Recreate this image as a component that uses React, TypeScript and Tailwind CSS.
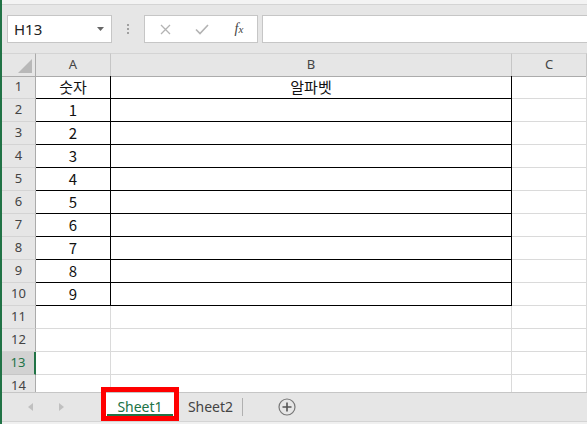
import React from "react";

const COLS = ["A", "B", "C"];
const ROWS = Array.from({ length: 14 }, (_, i) => i + 1);

function cellContent(r: number, c: number): string {
  if (c === 0) {
    if (r === 1) return "숫자";
    if (r >= 2 && r <= 10) return String(r - 1);
  }
  if (c === 1 && r === 1) return "알파벳";
  return "";
}

export default function App() {
  return (
    <div
      className="relative w-[587px] h-[424px] overflow-hidden bg-[#e6e6e6] border-l-2 border-[#217346] flex flex-col"
      style={{ fontFamily: '"Noto Sans", "Noto Sans CJK KR", sans-serif' }}
    >
      {/* top strip */}
      <div className="h-[5px] bg-[#f3f3f3] border-b border-[#d4d4d4] shrink-0" />

      {/* formula bar */}
      <div className="h-[48px] shrink-0 flex items-start pt-[10px]">
        <div className="ml-[5px] w-[105px] h-[28px] bg-white border border-[#c6c6c6] flex items-center justify-between pl-[6px] pr-[7px]">
          <span className="text-[15px] text-[#222] leading-none">H13</span>
          <svg width="7" height="4" viewBox="0 0 7 4">
            <path d="M0 0 L7 0 L3.5 4 Z" fill="#666" />
          </svg>
        </div>
        <div className="w-[32px] h-[28px] flex flex-col items-center justify-center gap-[2px]">
          <div className="w-[2px] h-[2px] bg-[#a0a0a0]" />
          <div className="w-[2px] h-[2px] bg-[#a0a0a0]" />
          <div className="w-[2px] h-[2px] bg-[#a0a0a0]" />
        </div>
        <div className="w-[114px] h-[28px] bg-white border border-[#c6c6c6] flex items-center">
          <div className="w-[38px] flex justify-center pl-[2px]">
            <svg width="11" height="11" viewBox="0 0 11 11">
              <path d="M1 1 L10 10 M10 1 L1 10" stroke="#b3b3b3" strokeWidth="1.3" />
            </svg>
          </div>
          <div className="w-[38px] flex justify-center">
            <svg width="14" height="11" viewBox="0 0 14 11">
              <path d="M1 5.5 L5 9.5 L13 1" stroke="#b3b3b3" strokeWidth="1.6" fill="none" />
            </svg>
          </div>
          <div className="w-[36px] flex justify-center">
            <span
              className="text-[14px] italic text-[#444] leading-none"
              style={{ fontFamily: '"Liberation Serif", "DejaVu Serif", serif' }}
            >
              f<span className="text-[11px]">x</span>
            </span>
          </div>
        </div>
        <div className="ml-[4px] flex-1 h-[28px] bg-white border border-[#c6c6c6] border-r-0" />
      </div>

      {/* sheet grid */}
      <div className="flex-1 overflow-hidden bg-white">
        <div className="grid grid-cols-[34px_75px_401px_75px_1fr] auto-rows-[23px]">
          {/* header row */}
          <div className="h-[24px] bg-[#e6e6e6] border-t border-[#d4d4d4] border-r border-r-[#ababab] border-b border-b-[#ababab] relative">
            <svg className="absolute right-[3px] bottom-[3px]" width="14" height="14" viewBox="0 0 14 14">
              <path d="M14 0 L14 14 L0 14 Z" fill="#b8b8b8" />
            </svg>
          </div>
          {COLS.map((c) => (
            <div
              key={c}
              className="h-[24px] bg-[#e6e6e6] border-t border-[#d4d4d4] border-r border-r-[#c6c6c6] border-b border-b-[#ababab] flex items-center justify-center text-[13px] text-[#444]"
            >
              {c}
            </div>
          ))}
          <div className="h-[24px] bg-[#e6e6e6] border-t border-[#d4d4d4] border-b border-b-[#ababab]" />

          {ROWS.map((r) => {
            const sel = r === 13;
            return (
              <React.Fragment key={r}>
                <div
                  className={
                    sel
                      ? "bg-[#d2d2d2] border-r-2 border-r-[#217346] border-b border-b-[#c6c6c6] flex items-center justify-center text-[13px] text-[#217346]"
                      : "bg-[#e6e6e6] border-r border-r-[#ababab] border-b border-b-[#d4d4d4] flex items-center justify-center text-[13px] text-[#444]"
                  }
                >
                  {r}
                </div>
                {[0, 1, 2].map((c) => {
                  const table = c < 2 && r <= 10;
                  return (
                    <div
                      key={c}
                      className={
                        table
                          ? "border-r border-b border-black flex items-center justify-center text-[15px] text-[#111]"
                          : "border-r border-b border-[#dadada] flex items-center justify-center text-[15px] text-[#111]"
                      }
                      style={{ fontFamily: '"Noto Sans CJK KR", "Noto Sans", sans-serif' }}
                    >
                      {cellContent(r, c)}
                    </div>
                  );
                })}
                <div className="border-b border-[#dadada]" />
              </React.Fragment>
            );
          })}
        </div>
      </div>

      {/* tab bar */}
      <div className="h-[29px] shrink-0 bg-[#e6e6e6] border-t border-[#c6c6c6] flex items-center">
        <div className="w-[99px] flex items-center">
          <div className="ml-[26px]">
            <svg width="5" height="8" viewBox="0 0 5 8">
              <path d="M5 0 L0 4 L5 8 Z" fill="#c0c0c0" />
            </svg>
          </div>
          <div className="ml-[26px]">
            <svg width="5" height="8" viewBox="0 0 5 8">
              <path d="M0 0 L5 4 L0 8 Z" fill="#c0c0c0" />
            </svg>
          </div>
        </div>
        <div className="w-[78px] h-full bg-white relative flex items-center justify-center text-[14px] text-[#217346]">
          <span className="-mt-[2px]">Sheet1</span>
          <div className="absolute left-[6px] right-[6px] bottom-[5px] h-[2px] bg-[#217346]" />
        </div>
        <div className="w-[63px] flex items-center justify-center text-[14px] text-[#444] -mt-[2px]">Sheet2</div>
        <div className="w-px h-[18px] bg-[#b0b0b0]" />
        <div className="ml-[35px] -mt-[1px]">
          <svg width="18" height="18" viewBox="0 0 18 18">
            <circle cx="9" cy="9" r="8" fill="none" stroke="#777" strokeWidth="1.2" />
            <path d="M9 4.5 V13.5 M4.5 9 H13.5" stroke="#555" strokeWidth="1.6" />
          </svg>
        </div>
      </div>
      <div className="h-[3px] shrink-0 bg-[#f0f0f0] border-t border-[#d4d4d4]" />

      {/* red annotation box */}
      <div className="absolute left-[99px] top-[387px] w-[78px] h-[34px] border-[5px] border-[#ff0000] pointer-events-none" />
    </div>
  );
}
